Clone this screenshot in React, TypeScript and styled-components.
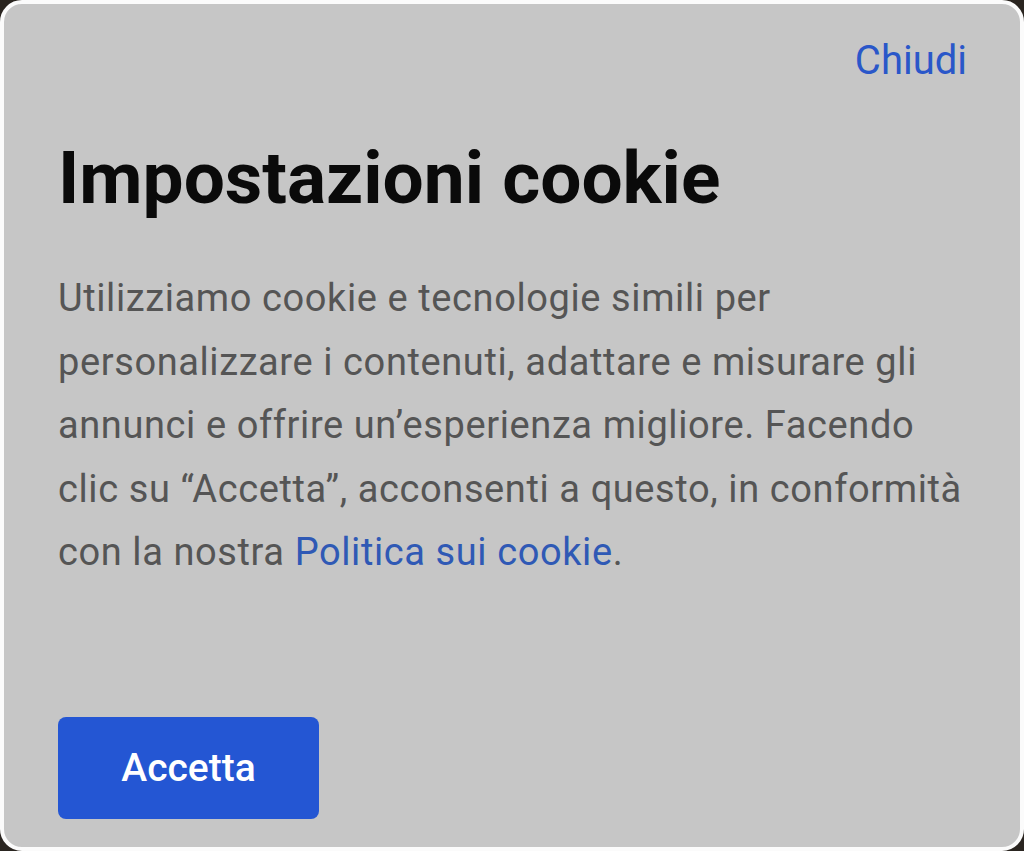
import React from 'react';
import styled, { createGlobalStyle } from 'styled-components';

const GlobalStyle = createGlobalStyle`
  html, body {
    margin: 0;
    padding: 0;
    background: #2a2520;
  }
  body {
    font-family: Roboto, "Noto Sans", "Liberation Sans", sans-serif;
  }
`;

const Sheet = styled.div`
  box-sizing: border-box;
  width: 1024px;
  height: 851px;
  background: #c6c6c6;
  border: 4px solid #fbfbfb;
  border-radius: 22px;
  padding: 33px 54px 28px 54px;
  display: flex;
  flex-direction: column;
`;

const TopBar = styled.div`
  display: flex;
  justify-content: flex-end;
`;

const CloseLink = styled.button`
  background: none;
  border: none;
  padding: 0;
  margin-right: -1px;
  font-family: inherit;
  font-size: 40px;
  line-height: 48px;
  color: #2a57c9;
  cursor: pointer;
`;

const Title = styled.h1`
  margin: 51px 0 0 0;
  font-size: 73px;
  line-height: 84px;
  font-weight: 700;
  color: #0a0a0a;
`;

const Body = styled.p`
  margin: 47px 0 0 0;
  font-size: 38px;
  line-height: 63.5px;
  letter-spacing: 0.6px;
  color: #555555;
  max-width: 914px;
`;

const PolicyLink = styled.a`
  color: #2f59b5;
  text-decoration: none;
`;

const Footer = styled.div`
  margin-top: auto;
  display: flex;
`;

const AcceptButton = styled.button`
  width: 261px;
  height: 102px;
  background: #2456d3;
  border: none;
  border-radius: 8px;
  color: #ffffff;
  font-family: inherit;
  font-size: 39px;
  font-weight: 500;
  cursor: pointer;
`;

export default function App() {
  return (
    <>
      <GlobalStyle />
      <Sheet>
        <TopBar>
          <CloseLink>Chiudi</CloseLink>
        </TopBar>
        <Title>Impostazioni cookie</Title>
        <Body>
          Utilizziamo cookie e tecnologie simili per personalizzare i contenuti, adattare e misurare gli
          annunci e offrire un’esperienza migliore. Facendo clic su “Accetta”, acconsenti a questo, in
          conformità con la nostra <PolicyLink href="#">Politica sui cookie</PolicyLink>.
        </Body>
        <Footer>
          <AcceptButton>Accetta</AcceptButton>
        </Footer>
      </Sheet>
    </>
  );
}
